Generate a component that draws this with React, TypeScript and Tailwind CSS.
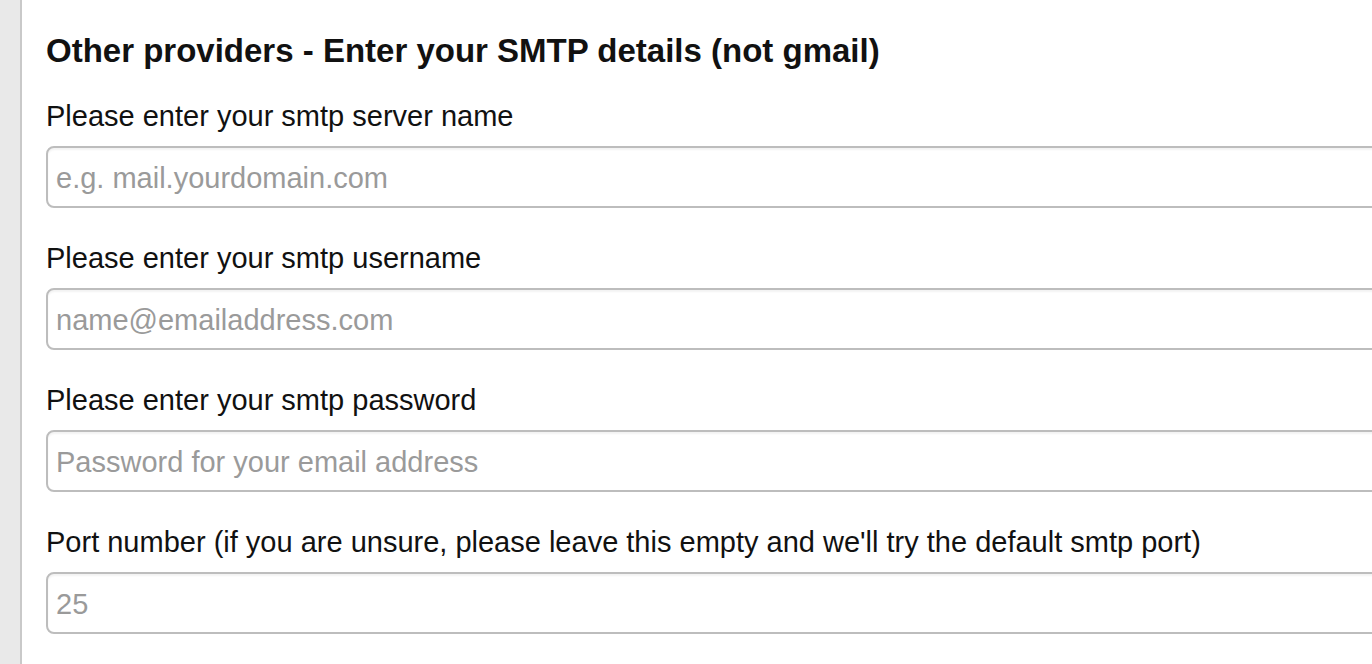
const fields = [
  { label: 'Please enter your smtp server name', placeholder: 'e.g. mail.yourdomain.com', type: 'text' },
  { label: 'Please enter your smtp username', placeholder: 'name@emailaddress.com', type: 'text' },
  { label: 'Please enter your smtp password', placeholder: 'Password for your email address', type: 'password' },
  {
    label: "Port number (if you are unsure, please leave this empty and we'll try the default smtp port)",
    placeholder: '25',
    type: 'text',
  },
]

export default function App() {
  return (
    <div className="flex h-[664px] w-full overflow-hidden bg-white font-['Liberation_Sans',Arial,sans-serif] text-[#111]">
      {/* side strip */}
      <div className="w-[20px] shrink-0 border-r-2 border-[#c9c9c9] bg-[#e9e9e9] box-content" />

      <div className="min-w-0 flex-1 pl-[24px] pt-[34px]">
        <h2 className="text-[33px] font-bold leading-[33px]">
          Other providers - Enter your SMTP details (not gmail)
        </h2>

        <div className="mt-[35px] flex flex-col gap-[36px]">
          {fields.map((f) => (
            <div key={f.label} className="flex flex-col gap-[16px]">
              <label className="text-[29px] leading-[28px]">{f.label}</label>
              <input
                type={f.type}
                placeholder={f.placeholder}
                className="h-[62px] w-[1400px] rounded-[8px] border-2 border-[#bdbdbd] bg-white px-[8px] pt-[3px] text-[29px] shadow-[inset_0_2px_2px_rgba(0,0,0,0.05)] outline-none placeholder:text-[#9a9a9a]"
              />
            </div>
          ))}
        </div>
      </div>
    </div>
  )
}
